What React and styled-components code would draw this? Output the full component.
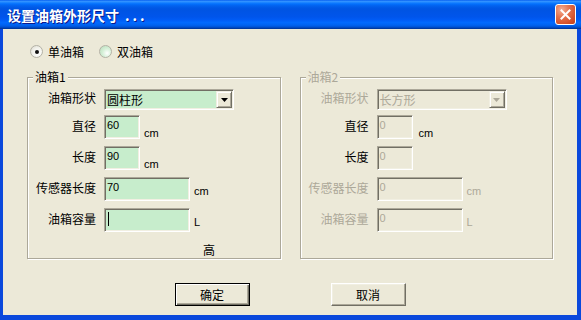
import React from 'react';
import styled, { createGlobalStyle, css } from 'styled-components';

const CJK = `"Noto Sans CJK SC", "Liberation Sans", sans-serif`;
const LAT = `Tahoma, "Liberation Sans", "Noto Sans CJK SC", sans-serif`;
const GREY = '#ACA899';

const Global = createGlobalStyle`
  html, body { margin: 0; padding: 0; background: #ffffff; }
  body { width: 581px; height: 320px; overflow: hidden; font-family: ${CJK}; }
`;

const Window = styled.div`
  width: 581px;
  height: 320px;
  display: flex;
  flex-direction: column;
  box-sizing: border-box;
  background: #0a48dc;
`;

const TitleBar = styled.div`
  height: 29px;
  flex: none;
  display: flex;
  align-items: center;
  padding: 0 5px 0 7px;
  box-sizing: border-box;
  background: linear-gradient(
    to bottom,
    #0058ee 0%, #3593ff 4%, #288eff 7%, #127dff 10%, #036ffc 14%,
    #0262ee 20%, #0057e5 28%, #0054e3 34%, #0055eb 58%, #005bf5 68%,
    #026afe 78%, #0062ef 87%, #0052d6 93%, #0040ab 97%, #003092 100%
  );
`;

const TitleText = styled.div`
  flex: 1;
  color: #ffffff;
  font: bold 14px ${CJK};
  line-height: 16px;
  text-shadow: 1px 1px 0 #0a1a8c;
  white-space: nowrap;
`;

const Dots = styled.span`
  letter-spacing: 3px;
  margin-left: 6px;
`;

const CloseButton = styled.div`
  width: 21px;
  height: 21px;
  box-sizing: border-box;
  border: 1px solid #ffffff;
  border-radius: 3px;
  background: radial-gradient(circle at 30% 25%, #f4ae94 0%, #e4714c 40%, #d4502a 75%, #c0401c 100%);
  display: flex;
  align-items: center;
  justify-content: center;
`;

const Frame = styled.div`
  flex: 1;
  display: flex;
  flex-direction: column;
  background: #ece9d8;
  border-style: solid;
  border-color: #0a48dc;
  border-width: 0 4px 5px 3px;
  padding: 16px 24px 0;
  min-height: 0;
`;

const RadioRow = styled.div`
  display: flex;
  align-items: center;
  height: 13px;
  padding-left: 3px;
`;

const RadioOption = styled.div`
  display: flex;
  align-items: center;
  gap: 5px;
  margin-right: ${p => p.$mr || 0}px;
  font: 12px ${CJK};
  line-height: 14px;
  color: #000;
`;

const RadioCircle = styled.span`
  width: 13px;
  height: 13px;
  box-sizing: border-box;
  border-radius: 50%;
  border: 1px solid #b4b2a6;
  background: ${p => p.$hover
    ? 'radial-gradient(circle at 65% 65%, #ffffff 0%, #d6f0d8 45%, #b6dcb9 100%)'
    : 'radial-gradient(circle at 65% 65%, #ffffff 0%, #f2f2ec 50%, #d9d7cc 100%)'};
  display: flex;
  align-items: center;
  justify-content: center;
  &::after {
    content: '';
    width: 4px;
    height: 4px;
    border-radius: 50%;
    background: ${p => (p.$checked ? '#101010' : 'transparent')};
  }
`;

const Groups = styled.div`
  display: grid;
  grid-template-columns: 1fr 1fr;
  column-gap: 19px;
  margin-top: 19px;
  height: 182px;
`;

const GroupBox = styled.div`
  position: relative;
  box-sizing: border-box;
  border: 1px solid #aca899;
  box-shadow: inset 1px 1px 0 #ffffff, 1px 1px 0 #ffffff;
  padding: 11px 0 0 6px;
  display: flex;
  flex-direction: column;
`;

const Legend = styled.span`
  position: absolute;
  top: -8px;
  left: 5px;
  padding: 0 2px;
  background: #ece9d8;
  font: 12px ${CJK};
  line-height: 14px;
  color: ${p => (p.$disabled ? GREY : '#000')};
`;

const Row = styled.div`
  display: flex;
  align-items: center;
  height: ${p => p.$h}px;
  margin-top: ${p => p.$mt || 0}px;
`;

const Label = styled.div`
  width: 62px;
  flex: none;
  margin-right: 8px;
  text-align: right;
  white-space: nowrap;
  font: 12px ${CJK};
  line-height: 14px;
  padding-bottom: 3px;
  color: ${p => (p.$disabled ? GREY : '#000')};
`;

const sunken = css`
  box-sizing: border-box;
  border: 1px solid;
  border-color: #aca899 #ffffff #ffffff #aca899;
  box-shadow: inset 1px 1px 0 #716f64, inset -1px -1px 0 #f1efe2;
`;

const Input = styled.div`
  ${sunken};
  width: ${p => p.$w}px;
  height: 24px;
  flex: none;
  display: flex;
  align-items: flex-start;
  padding: 3px 2px 0 2px;
  background: ${p => (p.$disabled ? '#ece9d8' : '#c7edcc')};
  font: 11px ${LAT};
  line-height: 13px;
  color: ${p => (p.$disabled ? GREY : '#000')};
`;

const Caret = styled.span`
  width: 1px;
  height: 14px;
  margin-left: 1px;
  background: #000;
`;

const Unit = styled.div`
  align-self: flex-end;
  margin-left: ${p => p.$ml}px;
  margin-bottom: ${p => p.$mb}px;
  font: 11px ${LAT};
  line-height: 13px;
  color: ${p => (p.$disabled ? GREY : '#000')};
`;

const Combo = styled.div`
  ${sunken};
  width: 130px;
  height: 21px;
  flex: none;
  display: flex;
  align-items: center;
  background: ${p => (p.$disabled ? '#ece9d8' : '#c7edcc')};
`;

const ComboText = styled.div`
  flex: 1;
  padding-left: 2px;
  font: 12px ${CJK};
  line-height: 14px;
  color: ${p => (p.$disabled ? GREY : '#000')};
`;

const ComboButton = styled.div`
  width: 16px;
  height: 17px;
  margin-right: 1px;
  box-sizing: border-box;
  background: #ece9d8;
  border: 1px solid;
  border-color: #f1efe2 #716f64 #716f64 #f1efe2;
  box-shadow: inset 1px 1px 0 #ffffff, inset -1px -1px 0 #aca899;
  display: flex;
  align-items: center;
  justify-content: center;
`;

const Note = styled.div`
  margin-left: 169px;
  font: 12px ${CJK};
  line-height: 14px;
  color: #000;
`;

const ButtonRow = styled.div`
  display: flex;
  justify-content: center;
  gap: 81px;
  margin-top: 24px;
`;

const Button = styled.button`
  width: 75px;
  height: 23px;
  box-sizing: border-box;
  padding: 0;
  background: #ece9d8;
  font: 12px ${CJK};
  line-height: 14px;
  color: #000;
  border: 1px solid;
  border-color: #ffffff #716f64 #716f64 #ffffff;
  box-shadow: inset -1px -1px 0 #aca899, inset 1px 1px 0 #f1efe2;
  ${p => p.$default && css`
    border-color: #000;
    box-shadow: inset 1px 1px 0 #ffffff, inset -1px -1px 0 #716f64, inset -2px -2px 0 #aca899;
  `}
`;

const Arrow = ({ disabled }) => (
  <svg width="7" height="4" viewBox="0 0 7 4">
    <polygon points="0,0 7,0 3.5,4" fill={disabled ? GREY : '#000'} />
  </svg>
);

const TankGroup = ({ title, shape, disabled, values, showNote }) => (
  <GroupBox>
    <Legend $disabled={disabled}>{title}</Legend>
    <Row $h={21}>
      <Label $disabled={disabled}>油箱形状</Label>
      <Combo $disabled={disabled}>
        <ComboText $disabled={disabled}>{shape}</ComboText>
        <ComboButton><Arrow disabled={disabled} /></ComboButton>
      </Combo>
    </Row>
    <Row $h={24} $mt={5}>
      <Label>直径</Label>
      <Input $w={36} $disabled={disabled}>{values[0]}</Input>
      <Unit $ml={disabled ? 6 : 4} $mb={-1}>cm</Unit>
    </Row>
    <Row $h={24} $mt={7}>
      <Label>长度</Label>
      <Input $w={36} $disabled={disabled}>{values[1]}</Input>
      {!disabled && <Unit $ml={4} $mb={-1}>cm</Unit>}
    </Row>
    <Row $h={24} $mt={7}>
      <Label $disabled={disabled}>传感器长度</Label>
      <Input $w={86} $disabled={disabled}>{values[2]}</Input>
      <Unit $ml={4} $mb={3} $disabled={disabled}>cm</Unit>
    </Row>
    <Row $h={24} $mt={7}>
      <Label $disabled={disabled}>油箱容量</Label>
      <Input $w={86} $disabled={disabled}>{values[3] === '' ? <Caret /> : values[3]}</Input>
      <Unit $ml={4} $mb={3} $disabled={disabled}>L</Unit>
    </Row>
    {showNote && (
      <Row $h={14} $mt={11}>
        <Note>高</Note>
      </Row>
    )}
  </GroupBox>
);

export default function App() {
  return (
    <>
      <Global />
      <Window>
        <TitleBar>
          <TitleText>设置油箱外形尺寸<Dots>...</Dots></TitleText>
          <CloseButton>
            <svg width="11" height="11" viewBox="0 0 11 11">
              <path d="M1.5 1.5 L9.5 9.5 M9.5 1.5 L1.5 9.5" stroke="#ffffff" strokeWidth="2" strokeLinecap="square" />
            </svg>
          </CloseButton>
        </TitleBar>
        <Frame>
          <RadioRow>
            <RadioOption $mr={15}>
              <RadioCircle $checked />
              单油箱
            </RadioOption>
            <RadioOption>
              <RadioCircle $hover />
              双油箱
            </RadioOption>
          </RadioRow>
          <Groups>
            <TankGroup title="油箱1" shape="圆柱形" values={['60', '90', '70', '']} showNote />
            <TankGroup title="油箱2" shape="长方形" disabled values={['0', '0', '0', '0']} />
          </Groups>
          <ButtonRow>
            <Button $default>确定</Button>
            <Button>取消</Button>
          </ButtonRow>
        </Frame>
      </Window>
    </>
  );
}
